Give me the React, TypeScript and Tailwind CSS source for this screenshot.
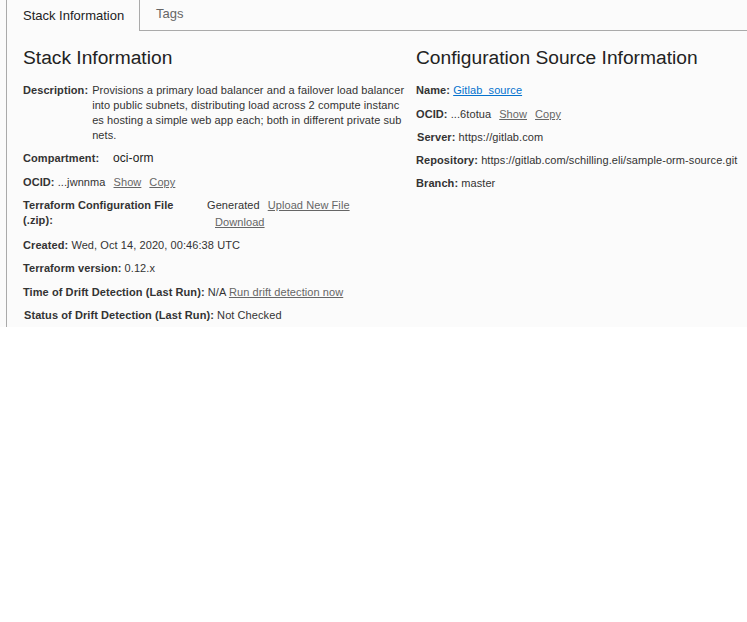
import React from "react";

const lbl = "font-bold text-[#333]";
const gl = "text-[#666] underline";

function Row({ children, className = "" }: { children: React.ReactNode; className?: string }) {
  return <div className={"leading-[15px] " + className}>{children}</div>;
}

export default function App() {
  return (
    <div
      className="bg-[#fbfbfb] h-[327px] pl-[6px] text-[11px] tracking-[0.08px] text-[#333]"
      style={{ fontFamily: '"Liberation Sans", Arial, sans-serif' }}
    >
      <div className="border-l border-[#aaa] h-full">
        <div className="flex h-[31px] tracking-normal">
          <div className="w-[133px] border-r border-[#aaa] pl-[16px] flex items-center text-[13px] text-[#222]">
            Stack Information
          </div>
          <div className="flex-1 border-b border-[#aaa] pl-[16px] pb-[2px] flex items-center text-[13px] text-[#666]">
            Tags
          </div>
        </div>
        <div className="pl-[16px] grid grid-cols-[393px_1fr]">
          <div>
            <h2 className="mt-[15px] text-[19.2px] leading-[24px] tracking-normal text-[#222]">Stack Information</h2>
            <div className="flex mt-[13px] leading-[15px]">
              <span className={lbl + " shrink-0"}>Description:</span>
              <span className="ml-[4px] w-[313px] break-all">
                Provisions a primary load balancer and a failover load balancer into public subnets, distributing load across 2 compute instances hosting a simple web app each; both in different private subnets.
              </span>
            </div>
            <div className="flex items-center mt-[8px] leading-[15px]">
              <span className={lbl + " w-[90px]"}>Compartment:</span>
              <span className="text-[12px] text-[#222]">oci-orm</span>
            </div>
            <Row className="mt-[9px]">
              <span className={lbl}>OCID:</span> ...jwnnma
              <a className={gl + " ml-[8px]"}>Show</a>
              <a className={gl + " ml-[8px]"}>Copy</a>
            </Row>
            <div className="flex mt-[8px] leading-[15px]">
              <span className={lbl + " w-[184px] pr-[24px] shrink-0"}>Terraform Configuration File (.zip):</span>
              <div className="w-[170px]">
                <span>Generated</span>
                <a className={gl + " ml-[8px]"}>Upload New File</a>
                <div className="mt-[2px]">
                  <a className={gl + " ml-[8px]"}>Download</a>
                </div>
              </div>
            </div>
            <Row className="mt-[8px]">
              <span className={lbl}>Created:</span> Wed, Oct 14, 2020, 00:46:38 UTC
            </Row>
            <Row className="mt-[8px]">
              <span className={lbl}>Terraform version:</span> 0.12.x
            </Row>
            <Row className="mt-[9px]">
              <span className={lbl}>Time of Drift Detection (Last Run):</span> N/A{" "}
              <a className={gl}>Run drift detection now</a>
            </Row>
            <Row className="mt-[8px] pl-[1px]">
              <span className={lbl}>Status of Drift Detection (Last Run):</span> Not Checked
            </Row>
          </div>
          <div>
            <h2 className="mt-[15px] text-[19.2px] leading-[24px] tracking-normal text-[#222]">Configuration Source Information</h2>
            <Row className="mt-[13px]">
              <span className={lbl}>Name:</span> <a className="text-[#0572ce] underline">Gitlab_source</a>
            </Row>
            <Row className="mt-[9px]">
              <span className={lbl}>OCID:</span> ...6totua
              <a className={gl + " ml-[8px]"}>Show</a>
              <a className={gl + " ml-[8px]"}>Copy</a>
            </Row>
            <Row className="mt-[8px] pl-[1px]">
              <span className={lbl}>Server:</span> https://gitlab.com
            </Row>
            <Row className="mt-[8px]">
              <span className={lbl}>Repository:</span> https://gitlab.com/schilling.eli/sample-orm-source.git
            </Row>
            <Row className="mt-[8px]">
              <span className={lbl}>Branch:</span> master
            </Row>
          </div>
        </div>
      </div>
    </div>
  );
}
